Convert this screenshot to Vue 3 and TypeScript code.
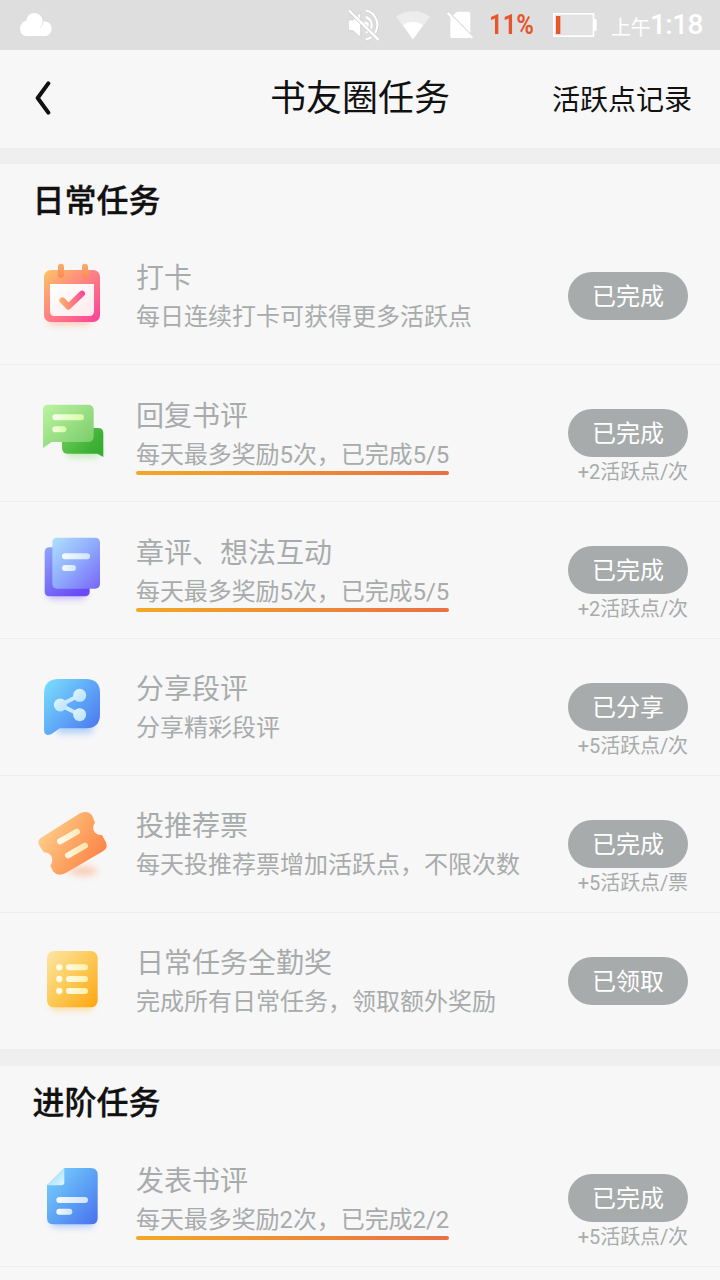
<script setup lang="ts">
type IconName = 'calendar' | 'chat' | 'notes' | 'share' | 'ticket' | 'list' | 'doc'

interface Task {
  icon: IconName
  iconShift: number
  raised?: boolean
  title: string
  desc: string
  underline?: boolean
  action: string
  reward?: string
}

interface Section {
  name: string
  tasks: Task[]
}

const sections: Section[] = [
  {
    name: '日常任务',
    tasks: [
      { icon: 'calendar', iconShift: 0, raised: true, title: '打卡', desc: '每日连续打卡可获得更多活跃点', action: '已完成' },
      { icon: 'chat', iconShift: 9, title: '回复书评', desc: '每天最多奖励5次，已完成5/5', underline: true, action: '已完成', reward: '+2活跃点/次' },
      { icon: 'notes', iconShift: 3, title: '章评、想法互动', desc: '每天最多奖励5次，已完成5/5', underline: true, action: '已完成', reward: '+2活跃点/次' },
      { icon: 'share', iconShift: 9, raised: true, title: '分享段评', desc: '分享精彩段评', action: '已分享', reward: '+5活跃点/次' },
      { icon: 'ticket', iconShift: 6, raised: true, title: '投推荐票', desc: '每天投推荐票增加活跃点，不限次数', action: '已完成', reward: '+5活跃点/票' },
      { icon: 'list', iconShift: 9, raised: true, title: '日常任务全勤奖', desc: '完成所有日常任务，领取额外奖励', action: '已领取' },
    ],
  },
  {
    name: '进阶任务',
    tasks: [
      { icon: 'doc', iconShift: 9, title: '发表书评', desc: '每天最多奖励2次，已完成2/2', underline: true, action: '已完成', reward: '+5活跃点/次' },
    ],
  },
]
</script>

<template>
  <div class="screen">
    <svg class="defs" width="0" height="0" aria-hidden="true">
      <defs>
        <linearGradient id="g-cal" x1="0" y1="0" x2="1" y2="1"><stop offset="0.05" stop-color="#fdbd68" /><stop offset="0.5" stop-color="#fd7f84" /><stop offset="1" stop-color="#fb409a" /></linearGradient>
        <linearGradient id="g-pin" x1="0" y1="0" x2="0" y2="1"><stop offset="0" stop-color="#fcac6c" /><stop offset="1" stop-color="#fd8a55" /></linearGradient>
        <linearGradient id="g-check" gradientUnits="userSpaceOnUse" x1="106" y1="150" x2="182" y2="140"><stop offset="0" stop-color="#fdb468" /><stop offset="1" stop-color="#f9459a" /></linearGradient>
        <linearGradient id="g-paper" x1="0" y1="0" x2="1" y2="1"><stop offset="0" stop-color="#ffffff" /><stop offset="1" stop-color="#fdeaec" /></linearGradient>
        <linearGradient id="g-chat" x1="0" y1="0" x2="1" y2="1"><stop offset="0" stop-color="#bdf4a2" /><stop offset="1" stop-color="#75ca66" /></linearGradient>
        <linearGradient id="g-chat2" x1="0" y1="0" x2="1" y2="0.6"><stop offset="0" stop-color="#72cf5c" /><stop offset="0.8" stop-color="#3fb136" /><stop offset="1" stop-color="#3aac32" /></linearGradient>
        <linearGradient id="g-lime" x1="0" y1="0" x2="1" y2="0"><stop offset="0" stop-color="#f4ffe9" /><stop offset="1" stop-color="#d6fda2" /></linearGradient>
        <linearGradient id="g-note" x1="0" y1="0" x2="1" y2="1"><stop offset="0" stop-color="#b0e0ff" /><stop offset="0.5" stop-color="#8fabfc" /><stop offset="1" stop-color="#7865f8" /></linearGradient>
        <linearGradient id="g-note2" x1="0" y1="0" x2="0.7" y2="1"><stop offset="0" stop-color="#8ea6f8" /><stop offset="1" stop-color="#694af6" /></linearGradient>
        <linearGradient id="g-ice" x1="0" y1="0" x2="1" y2="0"><stop offset="0" stop-color="#f7fbff" /><stop offset="1" stop-color="#cfe4ff" /></linearGradient>
        <linearGradient id="g-share" x1="0" y1="0" x2="1" y2="0.85"><stop offset="0" stop-color="#7be0fb" /><stop offset="0.5" stop-color="#61adf8" /><stop offset="1" stop-color="#4c78ef" /></linearGradient>
        <linearGradient id="g-node" x1="0" y1="0" x2="1" y2="1"><stop offset="0" stop-color="#e2f6ff" /><stop offset="1" stop-color="#b6e0fc" /></linearGradient>
        <linearGradient id="g-ticket" x1="0" y1="0.2" x2="1" y2="0.8"><stop offset="0" stop-color="#fed592" /><stop offset="0.5" stop-color="#fda764" /><stop offset="1" stop-color="#fc7d43" /></linearGradient>
        <linearGradient id="g-cream" gradientUnits="userSpaceOnUse" x1="105" y1="140" x2="190" y2="130"><stop offset="0" stop-color="#fffbee" /><stop offset="1" stop-color="#ffe4ac" /></linearGradient>
        <linearGradient id="g-list" x1="0" y1="0" x2="1" y2="1"><stop offset="0" stop-color="#fde6a4" /><stop offset="0.5" stop-color="#fdc956" /><stop offset="1" stop-color="#fda50f" /></linearGradient>
        <linearGradient id="g-yel" x1="0" y1="0" x2="1" y2="0"><stop offset="0" stop-color="#fffae6" /><stop offset="1" stop-color="#fff1a8" /></linearGradient>
        <linearGradient id="g-doc" x1="0" y1="0" x2="1" y2="1"><stop offset="0.1" stop-color="#75cafc" /><stop offset="0.5" stop-color="#5ea5f5" /><stop offset="1" stop-color="#4a70ee" /></linearGradient>
        <linearGradient id="g-fold" x1="0" y1="0" x2="1" y2="1"><stop offset="0.3" stop-color="#a4e0fd" /><stop offset="1" stop-color="#dff6ff" /></linearGradient>
        <filter id="soft" x="-40%" y="-150%" width="180%" height="400%"><feGaussianBlur stdDeviation="11" /></filter>
      </defs>
    </svg>

    <header class="status">
      <svg class="cloud" viewBox="0 0 96 70" width="32" height="23.3">
        <path d="M21 69C9 69 0 60 0 47c0-12 8-22 19-24C21 9 30 0 43 0c14 0 25 11 25 25l-1 6c-1 6-5 11-10 14 7-1 12-7 14-20 14 0 24 9 24 22 0 12-9 22-21 22z" fill="#fff" />
      </svg>
      <div class="status-right">
        <svg class="mute" viewBox="0 0 96 96" width="32" height="32" fill="none">
          <path d="M53 4a45 45 0 0 1 28 68M53 24a24 24 0 0 1 15 35M53 91a45 45 0 0 0 17-6M53 71l9-5" stroke="#c8c8c8" stroke-width="10" />
          <path d="M1 33h14l23-23v76L15 65H1z" fill="#fff" stroke="#c8c8c8" stroke-width="2" />
          <path d="M53 4a45 45 0 0 1 28 68M53 24a24 24 0 0 1 15 35M53 91a45 45 0 0 0 17-6M53 71l9-5" stroke="#fff" stroke-width="7" />
          <circle cx="53" cy="47" r="9" fill="#fff" />
          <path d="M3 4l89 89" stroke="#c8c8c8" stroke-width="11" />
          <path d="M3 4l89 89" stroke="#fff" stroke-width="7.5" />
        </svg>
        <svg class="wifi" viewBox="0 0 102 86" width="34" height="28.7">
          <path d="M0 17C31-5 71-5 102 17L51 85z" fill="#ededed" />
          <path d="M21 43c18-13 42-13 60 0L51 85z" fill="#fff" />
        </svg>
        <svg class="sim" viewBox="0 0 80 84" width="26.7" height="28">
          <path d="M18 13L31 2h33q6 0 6 6v58zM10 17l60 60q0 4-6 4H15q-5 0-5-5z" fill="#fff" />
          <path d="M2 6l74 75" stroke="#fff" stroke-width="6" />
        </svg>
        <span class="percent"><span>11%</span></span>
        <svg class="battery" viewBox="0 0 132 72" width="44" height="24">
          <rect x="2.5" y="2.5" width="119" height="67" fill="#e3e3e3" stroke="#fff" stroke-width="5" />
          <rect x="122" y="18" width="9" height="35" fill="#fff" />
          <rect x="9" y="9" width="13" height="54" fill="#e9552a" />
        </svg>
        <span class="ampm">上午</span><span class="clock">1:18</span>
      </div>
    </header>

    <nav class="nav">
      <svg class="back" viewBox="0 0 48 102" width="16" height="34">
        <path d="M40 7L8 51l32 44" fill="none" stroke="#111" stroke-width="12" stroke-linecap="round" stroke-linejoin="round" />
      </svg>
      <h1>书友圈任务</h1>
      <a class="records">活跃点记录</a>
    </nav>

    <section v-for="section in sections" :key="section.name" class="section">
      <h2>{{ section.name }}</h2>
      <div v-for="task in section.tasks" :key="task.title" class="row">
        <svg class="icon" :viewBox="`0 ${-task.iconShift} 300 288`" width="100" height="96">
          <template v-if="task.icon === 'calendar'">
            <rect x="72" y="190" width="130" height="34" rx="16" fill="#fb9a70" opacity="0.5" filter="url(#soft)" />
            <rect x="60" y="60" width="168" height="156" rx="20" fill="url(#g-cal)" />
            <path d="M78 102h132v82q0 14-14 14H92q-14 0-14-14z" fill="url(#g-paper)" />
            <rect x="102" y="41" width="18" height="43" rx="9" fill="url(#g-pin)" />
            <rect x="174" y="41" width="18" height="43" rx="9" fill="url(#g-pin)" />
            <path d="M115 151l18 19 41-39" fill="none" stroke="url(#g-check)" stroke-width="18" stroke-linecap="round" stroke-linejoin="round" />
          </template>
          <template v-else-if="task.icon === 'chat'">
            <rect x="130" y="168" width="96" height="34" rx="12" fill="#8cdd76" opacity="0.5" filter="url(#soft)" />
            <path d="M114 114h108q16 0 16 16v71l-18-10h-88q-18 0-18-18z" fill="url(#g-chat2)" />
            <path d="M72 44h120q17 0 17 17v78q0 17-17 17H83l-26 18V59q0-15 15-15z" fill="url(#g-chat)" />
            <rect x="85" y="73" width="95" height="18" rx="9" fill="url(#g-lime)" />
            <rect x="85" y="109" width="42" height="18" rx="9" fill="url(#g-lime)" />
          </template>
          <template v-else-if="task.icon === 'notes'">
            <rect x="70" y="188" width="116" height="34" rx="14" fill="#9b86f8" opacity="0.55" filter="url(#soft)" />
            <rect x="62" y="67" width="135" height="147" rx="13" fill="url(#g-note2)" />
            <rect x="85" y="38" width="143" height="153" rx="14" fill="url(#g-note)" />
            <rect x="114" y="85" width="84" height="18" rx="9" fill="url(#g-ice)" />
            <rect x="114" y="120" width="42" height="18" rx="9" fill="url(#g-ice)" />
          </template>
          <template v-else-if="task.icon === 'share'">
            <rect x="96" y="174" width="112" height="34" rx="14" fill="#7db5f8" opacity="0.6" filter="url(#soft)" />
            <path d="M104 45h82q42 0 42 42v64q0 42-42 42h-79l-23 16q-24 12-24-13V89q0-44 44-44z" fill="url(#g-share)" />
            <path d="M167 94l-58 29 58 29" fill="none" stroke="#cbebff" stroke-width="12" />
            <circle cx="109" cy="123" r="19.5" fill="url(#g-node)" />
            <circle cx="167" cy="94" r="19.5" fill="url(#g-node)" />
            <circle cx="167" cy="152" r="19.5" fill="url(#g-node)" />
          </template>
          <template v-else-if="task.icon === 'ticket'">
            <ellipse cx="178" cy="213" rx="42" ry="13" fill="#fd9a68" opacity="0.5" filter="url(#soft)" />
            <path d="M50 114L168 40q23-11 36 6l9 22c-11 14-6 36 21 37l11 20q9 16-7 28L124 220q-22 11-36-5l-9-18c10-14 9-38-20-40l-14-22q-6-12 5-21z" fill="url(#g-ticket)" />
            <path d="M108 124l51-29" stroke="url(#g-cream)" stroke-width="18" stroke-linecap="round" />
            <path d="M132 166l51-29" stroke="url(#g-cream)" stroke-width="18" stroke-linecap="round" />
          </template>
          <template v-else-if="task.icon === 'list'">
            <rect x="80" y="184" width="128" height="32" rx="14" fill="#fdc663" opacity="0.6" filter="url(#soft)" />
            <rect x="69" y="39" width="152" height="169" rx="20" fill="url(#g-list)" />
            <g v-for="y in [88, 123, 159]" :key="y">
              <circle cx="106" :cy="y" r="9.5" fill="#fffbe5" />
              <rect x="126" :y="y - 9" width="66" height="18" rx="9" fill="url(#g-yel)" />
            </g>
          </template>
          <template v-else>
            <rect x="80" y="184" width="130" height="32" rx="14" fill="#7dadf6" opacity="0.6" filter="url(#soft)" />
            <path d="M121 39h80q20 0 20 20v129q0 20-20 20H89q-20 0-20-20V91z" fill="url(#g-doc)" />
            <path d="M121 39v43q0 9-9 9H69z" fill="url(#g-fold)" />
            <rect x="97" y="126" width="95" height="18" rx="9" fill="url(#g-ice)" />
            <rect x="97" y="161" width="48" height="18" rx="9" fill="url(#g-ice)" />
          </template>
        </svg>
        <div class="text">
          <div class="title" :class="{ raised: task.raised }">{{ task.title }}</div>
          <div class="desc" :class="{ underline: task.underline }">{{ task.desc }}</div>
        </div>
        <div class="side">
          <button type="button" class="pill">{{ task.action }}</button>
          <div v-if="task.reward" class="reward">{{ task.reward }}</div>
        </div>
      </div>
    </section>
  </div>
</template>

<style>
body {
  margin: 0;
  background: #f7f7f7;
}
</style>

<style scoped>
.screen {
  width: 720px;
  height: 1280px;
  overflow: hidden;
  background: #f7f7f7;
  color: #111;
  font-family: Roboto, 'Noto Sans CJK SC', sans-serif;
}
.defs {
  display: block;
}
.status {
  height: 50px;
  background: #dedede;
  display: flex;
  justify-content: space-between;
  align-items: center;
  padding: 0 16px 0 20px;
  color: #fff;
}
.status-right {
  display: flex;
  align-items: center;
  height: 50px;
}
.wifi {
  margin-left: 16px;
}
.sim {
  margin-left: 17px;
}
.percent {
  width: 44px;
  margin-left: 15px;
  color: #e9552a;
  font-size: 28px;
  font-weight: 700;
  line-height: 52px;
}
.percent span {
  display: inline-block;
  transform: scaleX(0.85);
  transform-origin: left center;
}
.battery {
  margin-left: 20px;
}
.ampm {
  margin-left: 14px;
  font-size: 20px;
  line-height: 57px;
  height: 50px;
}
.clock {
  margin-left: -1px;
  margin-right: 1px;
  font-size: 28px;
  font-weight: 500;
  line-height: 52px;
  letter-spacing: -0.5px;
}
.nav {
  height: 98px;
  display: grid;
  grid-template-columns: 1fr auto 1fr;
  align-items: center;
  padding: 0 28px 0 35px;
}
.back {
  margin-bottom: 2px;
}
.nav h1 {
  margin: 0 7px 1px 0;
  font-size: 36px;
  font-weight: 400;
  line-height: 50px;
}
.records {
  justify-self: end;
  margin-top: 3px;
  font-size: 28px;
  line-height: 40px;
}
.section {
  border-top: 16px solid #efefef;
}
.section h2 {
  height: 64px;
  margin: 0;
  padding-left: 32.5px;
  font-size: 32px;
  font-weight: 500;
  line-height: 74px;
  -webkit-text-stroke: 0.3px #111;
}
.row {
  box-sizing: border-box;
  height: 137px;
  border-bottom: 1px solid #eeeeee;
  display: flex;
  padding: 0 32px 0 24px;
  color: #a8abab;
}
.icon {
  flex: none;
  margin-top: 22px;
}
.text {
  flex: 1;
  margin-left: 12px;
}
.title {
  padding-top: 32px;
  height: 40px;
  font-size: 28px;
  line-height: 40px;
}
.title.raised {
  padding-top: 31px;
}
.desc {
  width: fit-content;
  font-size: 24px;
  line-height: 37px;
  white-space: nowrap;
}
.desc.underline {
  letter-spacing: -0.08px;
}
.underline::after {
  content: '';
  display: block;
  height: 4px;
  margin-top: -3px;
  border-radius: 2px;
  background: linear-gradient(90deg, #f3a823, #ea7043);
}
.side {
  flex: none;
  width: 120px;
  padding-top: 44px;
}
.pill {
  display: block;
  width: 120px;
  height: 48px;
  padding: 2px 0 0;
  border: 0;
  border-radius: 24px;
  background: #a8abab;
  color: #fff;
  font: inherit;
  font-size: 24px;
  line-height: 46px;
}
.reward {
  font-size: 20px;
  line-height: 30px;
  letter-spacing: -0.1px;
  text-align: right;
  white-space: nowrap;
}
</style>
